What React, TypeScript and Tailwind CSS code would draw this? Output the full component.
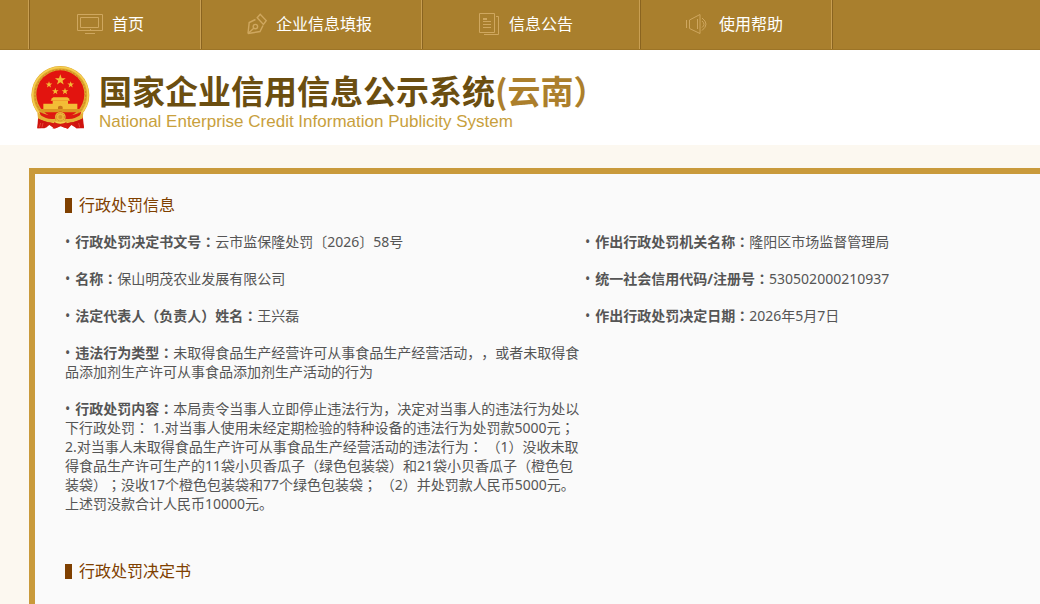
import { Fragment } from "react";
import type { ReactNode } from "react";
import clsx from "clsx";

type NavItem = {
  label: string;
  href: string;
  icon: ReactNode;
  spacing: string;
};

type Field = {
  label: string;
  value: string;
};

const navItems: NavItem[] = [
  { label: "首页", href: "#home", icon: <MonitorIcon />, spacing: "gap-[9px] pl-12 pr-14" },
  { label: "企业信息填报", href: "#report", icon: <PenIcon />, spacing: "gap-[9px] pl-[46px] pr-[49px]" },
  { label: "信息公告", href: "#notice", icon: <DocumentIcon />, spacing: "gap-[9px] pl-14 pr-[66px]" },
  { label: "使用帮助", href: "#help", icon: <HornIcon />, spacing: "gap-3 pl-[46px] pr-12" },
];

// two columns, filled row by row
const fields: Field[] = [
  { label: "行政处罚决定书文号", value: "云市监保隆处罚〔2026〕58号" },
  { label: "作出行政处罚机关名称", value: "隆阳区市场监督管理局" },
  { label: "名称", value: "保山明茂农业发展有限公司" },
  { label: "统一社会信用代码/注册号", value: "530502000210937" },
  { label: "法定代表人（负责人）姓名", value: "王兴磊" },
  { label: "作出行政处罚决定日期", value: "2026年5月7日" },
];

const longFields: Field[] = [
  {
    label: "违法行为类型",
    value: "未取得食品生产经营许可从事食品生产经营活动，，或者未取得食品添加剂生产许可从事食品添加剂生产活动的行为",
  },
  {
    label: "行政处罚内容",
    value:
      "本局责令当事人立即停止违法行为，决定对当事人的违法行为处以下行政处罚： 1.对当事人使用未经定期检验的特种设备的违法行为处罚款5000元； 2.对当事人未取得食品生产许可从事食品生产经营活动的违法行为： （1）没收未取得食品生产许可生产的11袋小贝香瓜子（绿色包装袋）和21袋小贝香瓜子（橙色包装袋）；没收17个橙色包装袋和77个绿色包装袋； （2）并处罚款人民币5000元。上述罚没款合计人民币10000元。",
  },
];

export default function App() {
  return (
    <div
      lang="zh-CN"
      className="flex min-h-screen flex-col bg-[#fcf8f0] font-['Noto_Sans','Noto_Sans_CJK_SC',sans-serif] text-sm text-[#555] [text-spacing-trim:space-all]"
    >
      <TopNav />
      <SiteHeader />
      <main className="mt-[23px] ml-[29px] flex-1 border-t-[6px] border-l-[6px] border-[#c99a3b] bg-[#fafafa] pt-[19px] pb-[21px] pl-[30px]">
        <SectionTitle>行政处罚信息</SectionTitle>
        <ul className="mt-[15px] grid grid-cols-[minmax(0,520px)_1fr] gap-y-[18px] leading-[19px]">
          {fields.map((f) => (
            <FieldItem key={f.label} {...f} />
          ))}
          {longFields.map((f) => (
            <FieldItem key={f.label} {...f} className="col-start-1" />
          ))}
        </ul>
        <SectionTitle className="mt-[46px]">行政处罚决定书</SectionTitle>
      </main>
    </div>
  );
}

function TopNav() {
  return (
    <nav className="flex h-[50px] shrink-0 border-b border-[#9c7427] bg-[#a97f2d] pl-7">
      {navItems.map((item) => (
        <a
          key={item.label}
          href={item.href}
          className={clsx(
            "flex items-center border-l border-[#c99f52] pb-0.5 text-base text-white shadow-[inset_1px_0_0_#8a6420]",
            item.spacing
          )}
        >
          {item.icon}
          <span>{item.label}</span>
        </a>
      ))}
      <span className="w-2 border-l border-[#c99f52] shadow-[inset_1px_0_0_#8a6420]" />
    </nav>
  );
}

function SiteHeader() {
  return (
    <header className="flex h-[95px] shrink-0 items-start gap-[7px] bg-white pt-[15px] pl-[30px]">
      <Emblem />
      <div className="pt-0.5">
        <h1 className="font-['Noto_Sans_CJK_SC',sans-serif] text-[33px] leading-[46px] font-bold text-[#6b4e10]">
          国家企业信用信息公示系统<span className="text-[#ac7f2c]">(云南）</span>
        </h1>
        <p className="font-['Liberation_Sans',Arial,sans-serif] text-[17px] leading-[18px] text-[#c8a03c]">
          National Enterprise Credit Information Publicity System
        </p>
      </div>
    </header>
  );
}

function SectionTitle({ children, className }: { children: ReactNode; className?: string }) {
  return (
    <h2 className={clsx("flex items-center gap-[7px] text-base leading-6 text-[#7f4000]", className)}>
      <span className="h-[15px] w-[7px] bg-[#7f4000]" />
      {children}
    </h2>
  );
}

function FieldItem({ label, value, className }: Field & { className?: string }) {
  return (
    <li className={className}>
      <span className="mr-[5px]">•</span>
      <strong className="font-bold">
        <Punctuated text={`${label}：`} />
      </strong>
      <Punctuated text={value} />
    </li>
  );
}

// colons and semicolons sit in the middle of their box
function Punctuated({ text }: { text: string }) {
  return (
    <>
      {text.split(/([：；])/).map((part, i) =>
        part === "：" || part === "；" ? (
          <span key={i} lang="ja" className="font-['Noto_Sans_CJK_JP',sans-serif]">
            {part}
          </span>
        ) : (
          <Fragment key={i}>{part}</Fragment>
        )
      )}
    </>
  );
}

function MonitorIcon() {
  return (
    <svg width="26" height="22" viewBox="0 0 26 22" fill="none" stroke="#cfa75f" aria-hidden="true">
      <path d="M.5 1.5h25v16H.5z" />
      <path d="M3.5 4.5h18v10h-18z" />
      <path d="M13 16.5h1M8 20.5h10" />
    </svg>
  );
}

function PenIcon() {
  return (
    <svg width="20" height="22" viewBox="0 0 20 22" fill="none" stroke="#cfa75f" strokeWidth="1.4" aria-hidden="true">
      <path d="M1 20.5 2.2 9.500 8.500 6.500M1 20.500 13 18.500 16 12.500" />
      <path d="M1 20.500 7 15" />
      <circle cx="8.400" cy="13.600" r="2.200" />
      <path d="M10.200 4.800 13.200 1.200 19.200 7.600 16.400 11.400Z" />
    </svg>
  );
}

function DocumentIcon() {
  return (
    <svg width="22" height="24" viewBox="0 0 22 24" fill="none" stroke="#cfa75f" aria-hidden="true">
      <path d="M1.500 1.500h15v19h-15z" />
      <path d="M18 4.500h2.500v18H6" />
      <path d="M5 6.500h4M5 9.500h8M5 12.500h8M5 15.500h8M5 7.500h4" />
    </svg>
  );
}

function HornIcon() {
  return (
    <svg width="21" height="22" viewBox="0 0 21 22" fill="none" stroke="#cfa75f" aria-hidden="true">
      <path d="M.5 7v8M3.500 7v8.500L14 20.500v-19z" />
      <path d="M11.500 6v10" />
      <path d="M16 5q8 6 0 12.500M16 8q4 3.500 0 6.500" />
    </svg>
  );
}

const STAR = "M0-10 2.400-3.200 9.500-3.100 3.800 1.200 5.900 8.100 0 4-5.900 8.100-3.800 1.200-9.500-3.100-2.400-3.200Z";

function Emblem() {
  return (
    <svg width="62" height="66" viewBox="0 0 186 198" aria-hidden="true">
      {/* drapery below the ring */}
      <path d="M26 132 22 190 48 188 58 180 74 191 92 184 114 191 124 180 140 190 162 188 156 132Z" fill="#d3180f" />
      <circle cx="91" cy="90" r="87" fill="#dfa52e" />
      <circle cx="91" cy="90" r="83" fill="none" stroke="#f5cf4f" strokeWidth="5" />
      <circle cx="91" cy="90" r="76" fill="none" stroke="#c98a1e" strokeWidth="3" strokeDasharray="6 5" />
      <circle cx="91" cy="88" r="72" fill="#e2140f" />
      <g fill="#f3bd36">
        <path d={STAR} transform="translate(91 45) scale(1.700)" />
        <path d={STAR} transform="translate(57 59) scale(1.050)" />
        <path d={STAR} transform="translate(122 59) scale(1.050)" />
        <path d={STAR} transform="translate(76 79) scale(1.050)" />
        <path d={STAR} transform="translate(105 79) scale(1.050)" />
        {/* gate tower */}
        <path d="M66 100 70 97H112L116 100 120 107H62Z" />
        <path d="M68 107H114V118H68Z" />
        <path d="M40 116H142V132H40Z" />
        <path d="M32 132H150L146 142H36Z" fill="#dc9721" />
      </g>
      <path d="M84 132v-7q7-6 14 0v7z" fill="#c8731a" />
      <path d="M28 140Q62 158 78 145 91 134 104 145 121 158 154 140L148 158Q118 169 104 162 91 150 78 162 62 169 34 158Z" fill="#dc1a11" />
      {/* cog wheel and ribbon */}
      <circle cx="91" cy="156" r="16" fill="#ebb53a" />
      <circle cx="91" cy="156" r="12" fill="none" stroke="#c07d18" strokeWidth="2" strokeDasharray="4 3" />
      <circle cx="91" cy="156" r="6" fill="#d89428" />
      <path d="M22 143Q52 167 76 161V170Q48 176 24 160ZM160 143Q130 167 106 161V170Q134 176 158 160Z" fill="#e6b037" />
      <path d="M26 162 51 171 44 190 22 190ZM156 162 131 171 138 190 162 190Z" fill="#cf130e" />
      <path d="M73 171Q91 183 109 171L114 191 98 186 91 180 84 186 68 191Z" fill="#d71b12" />
      <path d="M32 174 28 187M39 174 36 187M146 174 149 187" stroke="#ef5a45" strokeWidth="2" />
    </svg>
  );
}
